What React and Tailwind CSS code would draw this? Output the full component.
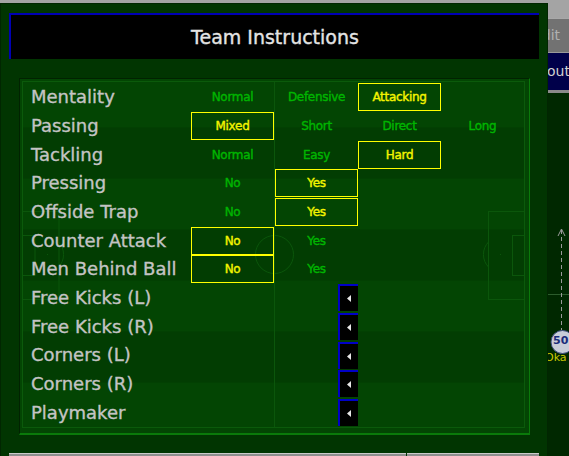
import React from "react";

const rows = [
  { label: "Mentality", opts: ["Normal", "Defensive", "Attacking"], sel: 2 },
  { label: "Passing", opts: ["Mixed", "Short", "Direct", "Long"], sel: 0 },
  { label: "Tackling", opts: ["Normal", "Easy", "Hard"], sel: 2 },
  { label: "Pressing", opts: ["No", "Yes"], sel: 1 },
  { label: "Offside Trap", opts: ["No", "Yes"], sel: 1 },
  { label: "Counter Attack", opts: ["No", "Yes"], sel: 0 },
  { label: "Men Behind Ball", opts: ["No", "Yes"], sel: 0 },
  { label: "Free Kicks (L)", picker: true },
  { label: "Free Kicks (R)", picker: true },
  { label: "Corners (L)", picker: true },
  { label: "Corners (R)", picker: true },
  { label: "Playmaker", picker: true },
];

const Pitch = () => (
  <svg
    className="absolute inset-0"
    width="501"
    height="345"
    viewBox="0 0 501 345"
  >
    <rect x="0" y="0" width="501" height="345" fill="#034503" />
    <rect x="0" y="45.5" width="501" height="51" fill="#023d02" />
    <rect x="0" y="147.5" width="501" height="51" fill="#023d02" />
    <rect x="0" y="249.5" width="501" height="51" fill="#023d02" />
    <g stroke="#0b560b" strokeWidth="1" fill="none">
      <line x1="251.5" y1="0" x2="251.5" y2="345" />
      <circle cx="251.5" cy="172.5" r="19" />
      <rect x="465.5" y="129.5" width="40" height="88" />
      <rect x="489.5" y="153.5" width="20" height="40" />
      <path d="M465.5 160 A18 18 0 0 0 465.5 185" />
      <rect x="-5" y="129.5" width="41" height="88" />
      <rect x="-5" y="153.5" width="17" height="40" />
      <path d="M35.5 160 A18 18 0 0 1 35.5 185" />
    </g>
    <rect x="477" y="172" width="1" height="1" fill="#0b560b" />
    <rect x="24" y="172" width="1" height="1" fill="#0b560b" />
    <rect x="251" y="172" width="1" height="1" fill="#0b560b" />
  </svg>
);

const Picker = () => (
  <div className="w-[20px] h-[27px] bg-black border-t-2 border-l-2 border-[#0000c8] flex items-center justify-center">
    <svg width="4" height="7" viewBox="0 0 4 7">
      <polygon points="4,0 4,7 0,3.5" fill="#e8e8e8" />
    </svg>
  </div>
);

const Row = ({ row }) => (
  <div className="flex items-center h-[28.67px]">
    <div className="w-[168px] pl-[8px] text-[18px] leading-none text-[#c4c4c4] whitespace-nowrap [-webkit-text-stroke:0.35px_#c4c4c4]">
      {row.label}
    </div>
    <div className="grid grid-cols-[84px_83px_83px_83px]">
      {row.picker ? (
        <>
          <div />
          <div className="w-[83px] flex justify-end">
            <Picker />
          </div>
        </>
      ) : (
        row.opts.map((o, i) => (
          <div
            key={i}
            className={
              i === row.sel
                ? "w-[83px] h-[28px] border border-[#ffff00] flex items-center justify-center text-[12px] text-[#f4f400] tracking-[-0.3px] [-webkit-text-stroke:0.4px_#f4f400]"
                : "w-[83px] h-[28px] flex items-center justify-center text-[12px] text-[#00b400] tracking-[-0.3px] [-webkit-text-stroke:0.4px_#00b400]"
            }
          >
            {o}
          </div>
        ))
      )}
    </div>
  </div>
);

export default function App() {
  return (
    <div className="w-[569px] h-[456px] overflow-hidden flex font-['DejaVu_Sans',sans-serif] bg-[#002a00]">
      <div className="w-[548px] flex flex-col">
        <div className="h-[3px] bg-[#a4a4a4] shrink-0" />
        <div className="flex-1 bg-[#013501] border-t border-l border-r border-[#012601] pt-[9px] pl-[8px] flex flex-col">
          <div className="w-[530px] h-[46px] bg-black border-t-2 border-l-2 border-[#0000b4] flex items-center justify-center text-[19px] text-[#e4e4e4] [-webkit-text-stroke:0.35px_#e4e4e4]">
            Team Instructions
          </div>
          <div className="mt-[19px] ml-[10px] w-[511px] border-t border-l border-[#012201] border-r border-b-2 border-r-[#0a7a0a] border-b-[#0a7a0a] pt-[2px] pl-[2px] pr-[4px] pb-[5px] bg-[#034503]">
            <div className="border border-[#0b5a0b] relative">
              <div className="relative w-[501px] h-[345px]">
                <Pitch />
                <div className="relative pt-px">
                  {rows.map((r, i) => (
                    <Row key={i} row={r} />
                  ))}
                </div>
              </div>
            </div>
          </div>
          <div className="mt-[18px] flex gap-px">
            <div className="w-[397px] h-[20px] bg-[#8e8e8e] border-t border-[#cacaca]" />
            <div className="w-[132px] h-[20px] bg-[#8e8e8e] border-t border-[#cacaca]" />
          </div>
        </div>
      </div>
      <div className="w-[21px] flex flex-col">
        <div className="h-[18px] bg-[#a4a4a4] shrink-0" />
        <div className="h-[34px] bg-[#727272] border-t border-[#a8a8a8] overflow-hidden flex items-center text-[14px] text-[#b0b0b0] shrink-0">
          <span className="ml-[-15px]">Edit</span>
        </div>
        <div className="h-px bg-[#9a9a9a] shrink-0" />
        <div className="h-[37px] bg-[#00004a] overflow-hidden flex items-center text-[14px] text-[#d0d0d0] shrink-0">
          <span className="ml-[-1px]">out</span>
        </div>
        <div className="h-[3px] bg-[#8a8a8a] shrink-0" />
        <div className="flex-1 relative overflow-hidden bg-[#002800]">
          <svg className="absolute left-0 top-0" width="21" height="363" viewBox="0 0 21 363">
            <line x1="0" y1="201.5" x2="21" y2="201.5" stroke="#2c5c2c" />
            <line x1="13.5" y1="137" x2="13.5" y2="237" stroke="#9a9a9a" strokeDasharray="4 3" />
            <path d="M10 143 L13.5 136 L17 143" stroke="#9a9a9a" fill="none" />
            <circle cx="14.5" cy="249" r="11.5" fill="#c8ccd8" stroke="#3a4a7a" />
          </svg>
          <div className="absolute left-[5px] top-[242px] text-[11px] font-bold leading-none text-[#1a2a7a]">
            50
          </div>
          <div className="absolute left-[-3px] top-[259px] text-[11px] leading-none text-[#c8c800]">
            Oka
          </div>
        </div>
      </div>
    </div>
  );
}
